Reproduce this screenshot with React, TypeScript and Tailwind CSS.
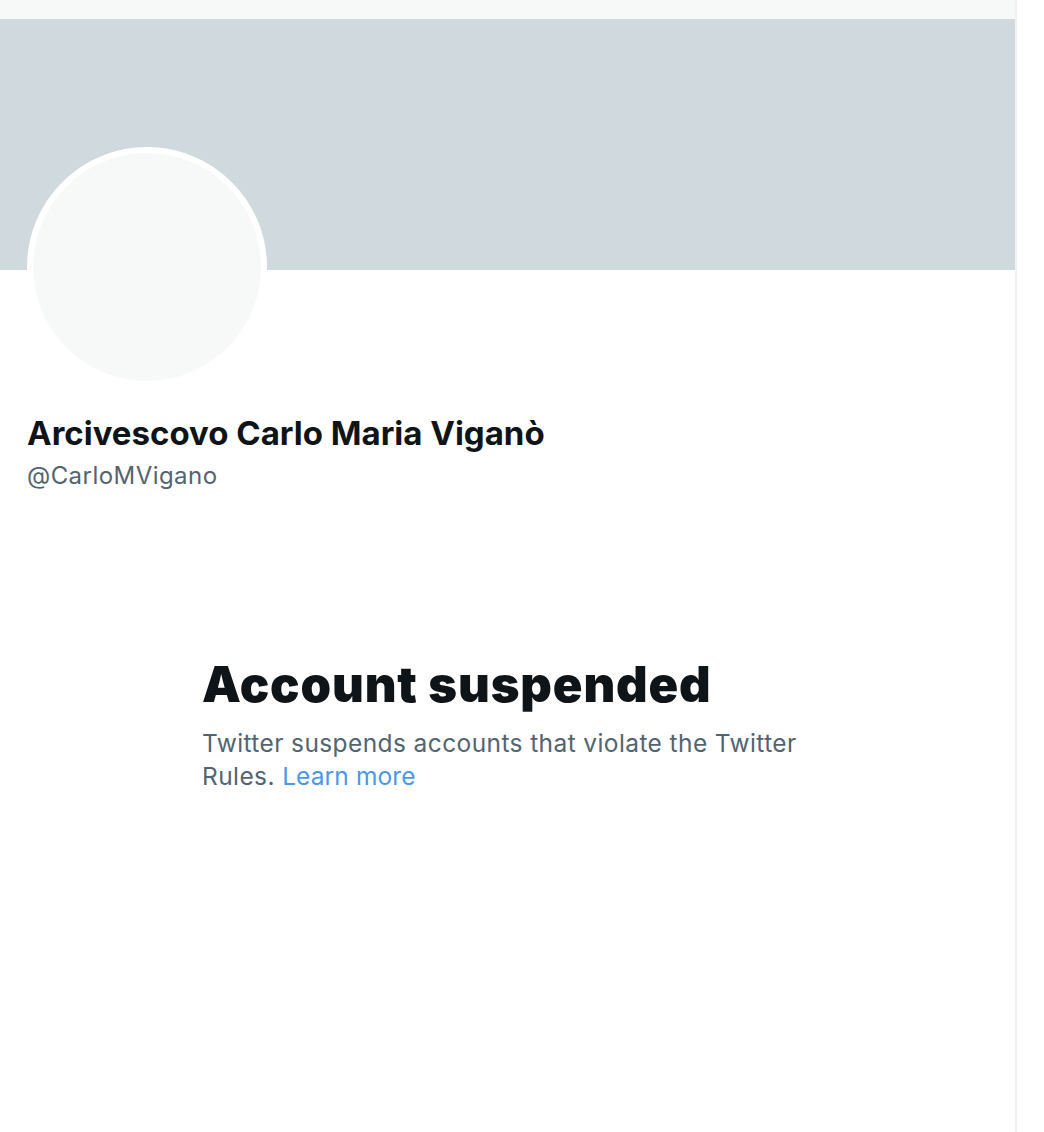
export default function App() {
  return (
    <div className="flex min-h-[1132px] bg-white" style={{ fontFamily: 'Inter, "Liberation Sans", sans-serif' }}>
      <main className="w-[1017px] shrink-0 border-r-2 border-[#eff3f4]">
        <div className="h-[19px] bg-[#f7f9f9]" />
        <div className="h-[251px] bg-[#cfd9de]" />
        <section className="px-[27px]">
          <div className="-mt-[123px] h-[240px] w-[240px] rounded-full border-[6px] border-white bg-[#f7f9f9]" />
          <div className="mt-[26px]">
            <h2 className="text-[33px] font-bold leading-[40px] text-[#0f1419]">
              Arcivescovo Carlo Maria Viganò
            </h2>
            <p className="mt-[7px] text-[24px] leading-[32px] tracking-[0.45px] text-[#536471]">@CarloMVigano</p>
          </div>
        </section>
        <section className="mt-[165px] pl-[202px]">
          <div className="w-[620px]">
            <h1 className="text-[49px] font-black leading-[56px] tracking-[0.85px] text-[#0f1419]">
              Account suspended
            </h1>
            <p className="mt-[14px] text-[24.5px] leading-[33px] tracking-[0.4px] text-[#536471]">
              Twitter suspends accounts that violate the Twitter Rules.{' '}
              <a href="#" className="tracking-[0.1px] text-[#4a99e9]">
                Learn more
              </a>
            </p>
          </div>
        </section>
      </main>
      <div className="flex-1" />
    </div>
  );
}
